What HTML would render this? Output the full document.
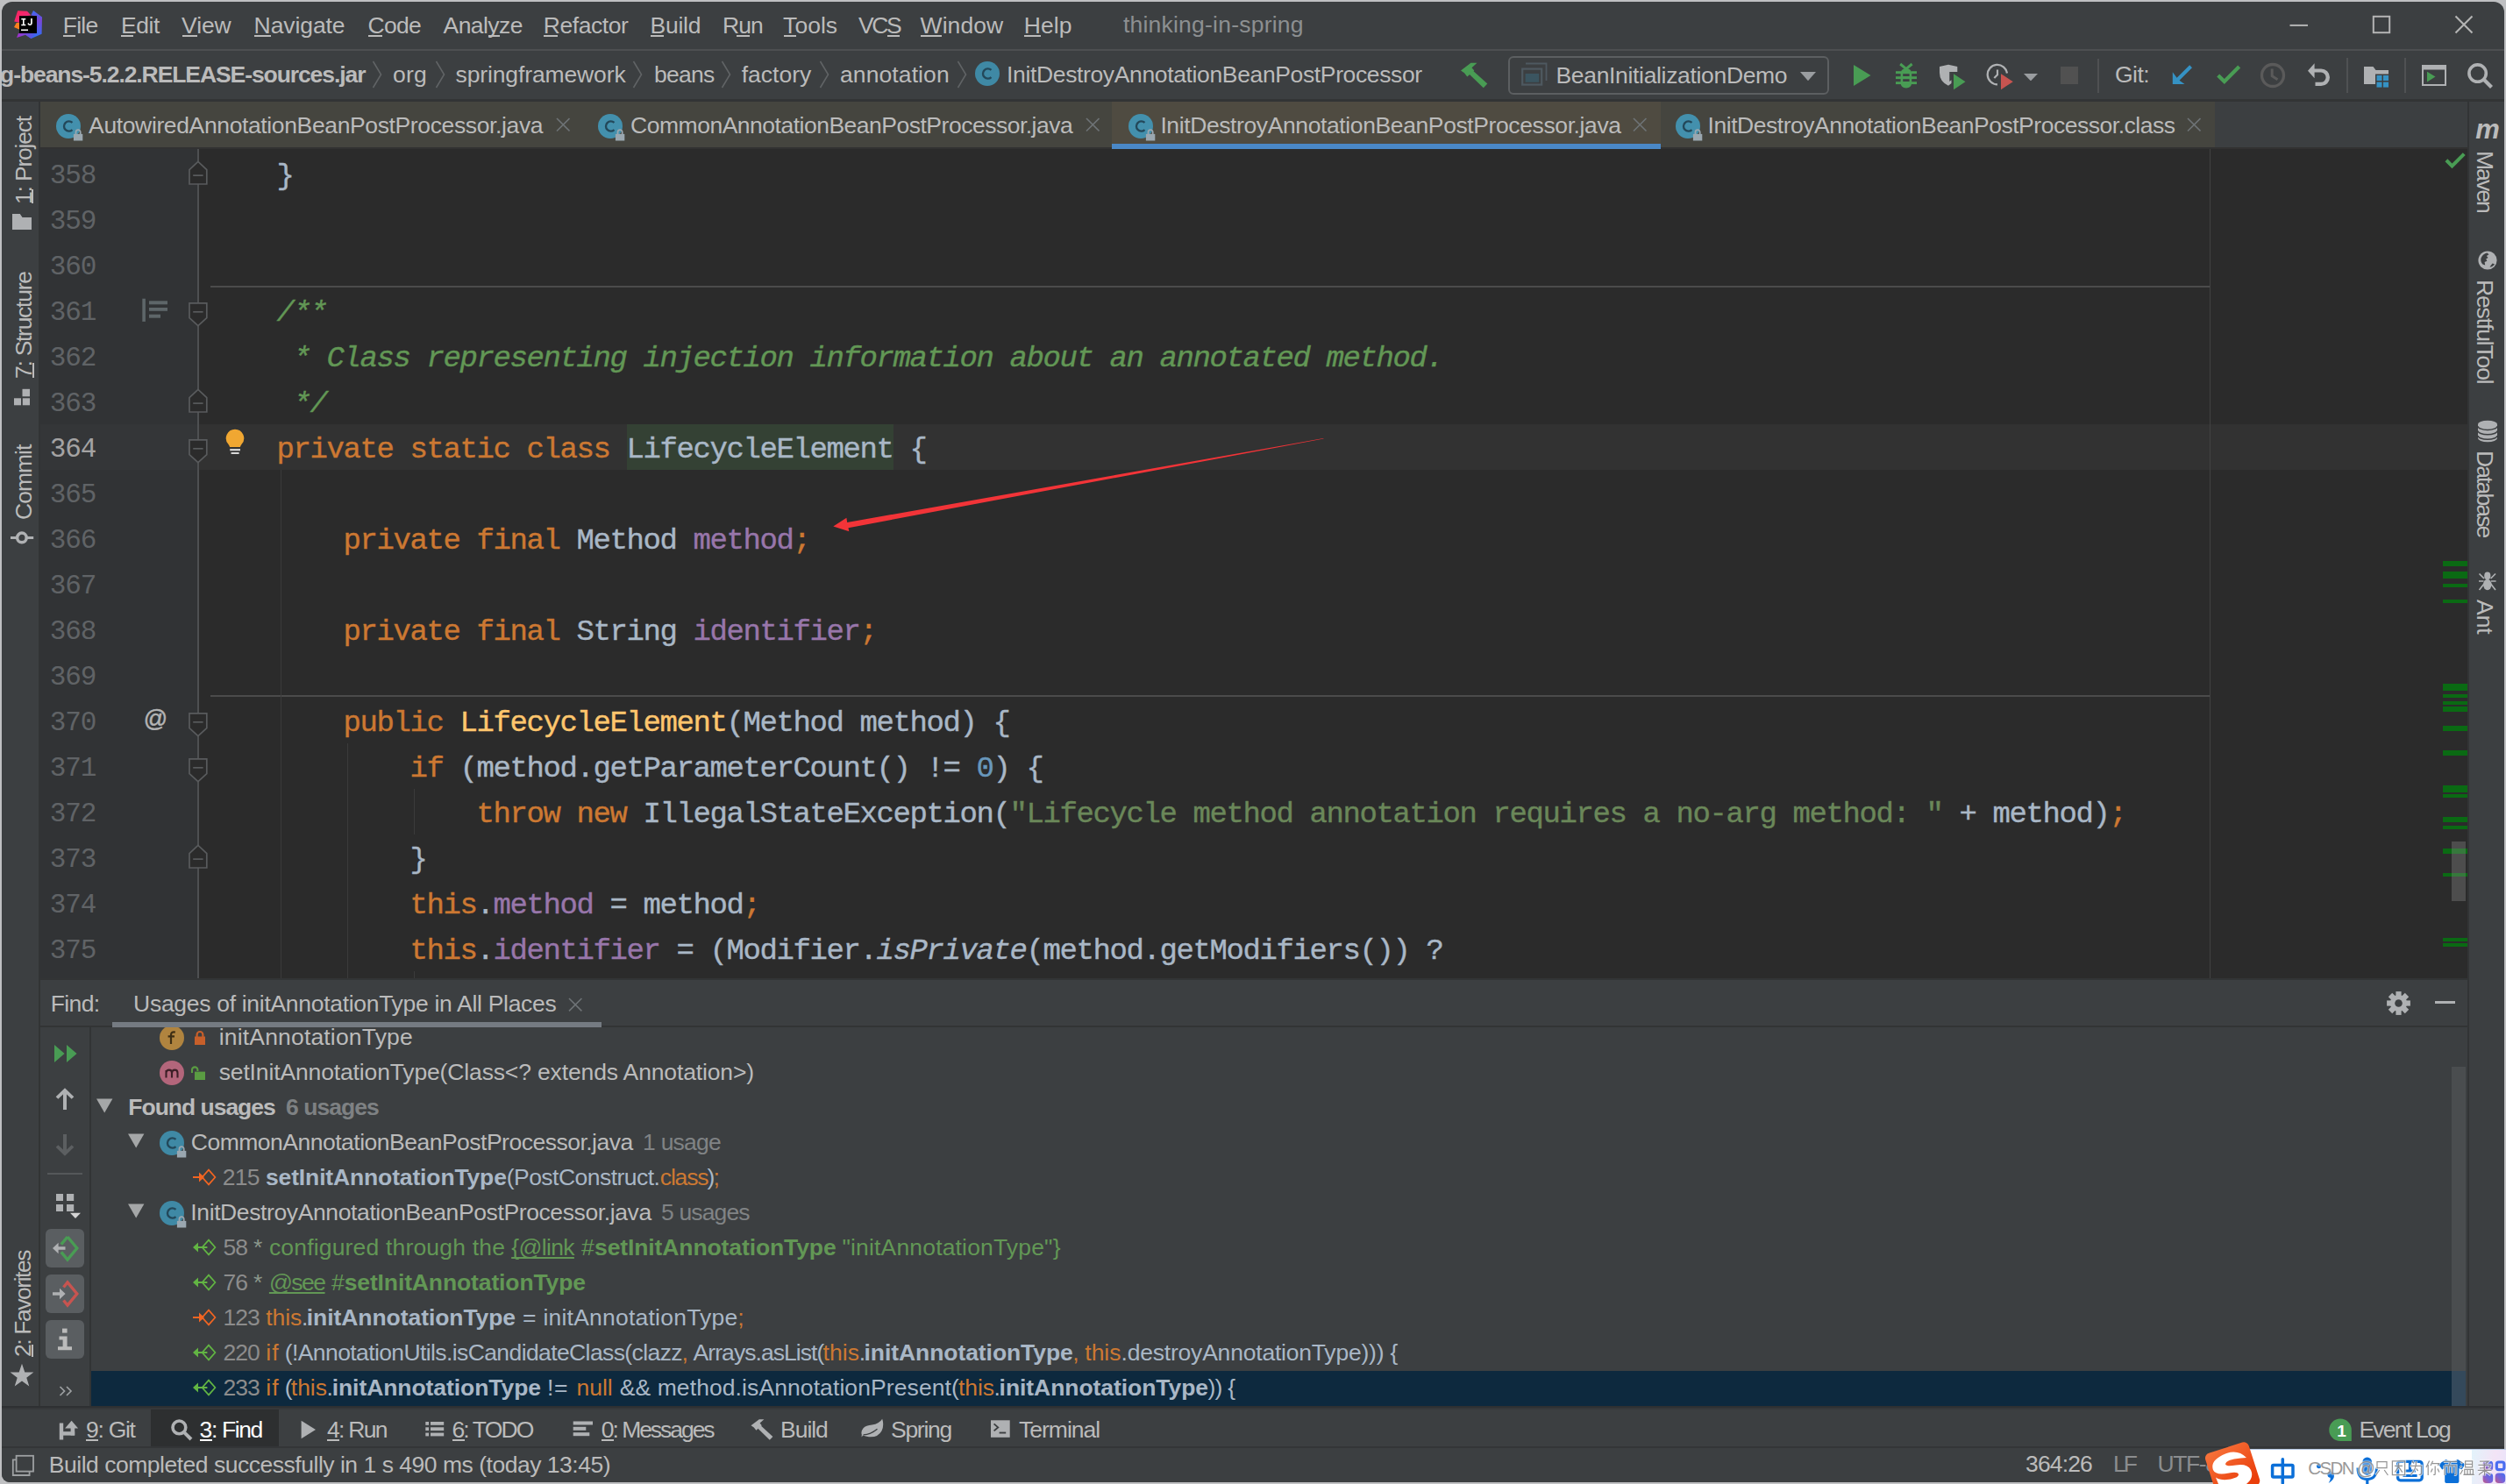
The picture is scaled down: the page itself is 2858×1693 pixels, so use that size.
<!DOCTYPE html>
<html><head><meta charset="utf-8"><title>thinking-in-spring</title><style>
html,body{margin:0;padding:0;background:#bfc0c2;}
body{width:2858px;height:1693px;position:relative;overflow:hidden;font-family:"Liberation Sans", sans-serif;}
#app{position:absolute;left:0;top:0;width:2858px;height:1693px;overflow:hidden;}
#app div,#app svg,#app span{position:absolute;}
#win{left:0;top:0;width:2858px;height:1693px;clip-path:inset(2px 2px 2px 2px round 12px 12px 9px 9px);}
#app span{white-space:pre;line-height:1em;text-decoration-skip-ink:none;}
.s{font-family:"Liberation Sans", sans-serif;}
.m{font-family:"Liberation Mono", monospace;}
</style></head><body><div id="app">
<div id="win">
<div style="left:0px;top:0px;width:2858px;height:1693px;background:#3c3f41;"></div>
<div style="left:2px;top:56px;width:2854px;height:2px;background:#4d4f51;"></div>
<span class="s" style="left:71.7px;top:15.9px;font-size:26.5px;color:#bbbbbb;letter-spacing:-0.712px">File</span>
<span class="s" style="left:137.9px;top:15.9px;font-size:26.5px;color:#bbbbbb;letter-spacing:-0.404px">Edit</span>
<span class="s" style="left:207.1px;top:15.9px;font-size:26.5px;color:#bbbbbb;letter-spacing:-0.128px">View</span>
<span class="s" style="left:289.6px;top:15.9px;font-size:26.5px;color:#bbbbbb;letter-spacing:-0.092px">Navigate</span>
<span class="s" style="left:419.5px;top:15.9px;font-size:26.5px;color:#bbbbbb;letter-spacing:-0.726px">Code</span>
<span class="s" style="left:505.5px;top:15.9px;font-size:26.5px;color:#bbbbbb;letter-spacing:-0.547px">Analyze</span>
<span class="s" style="left:619.8px;top:15.9px;font-size:26.5px;color:#bbbbbb;letter-spacing:-0.450px">Refactor</span>
<span class="s" style="left:741.6px;top:15.9px;font-size:26.5px;color:#bbbbbb;letter-spacing:-0.257px">Build</span>
<span class="s" style="left:824.0px;top:15.9px;font-size:26.5px;color:#bbbbbb;letter-spacing:-0.890px">Run</span>
<span class="s" style="left:893.1px;top:15.9px;font-size:26.5px;color:#bbbbbb;letter-spacing:0.036px">Tools</span>
<span class="s" style="left:979.1px;top:15.9px;font-size:26.5px;color:#bbbbbb;letter-spacing:-2.415px">VCS</span>
<span class="s" style="left:1049.6px;top:15.9px;font-size:26.5px;color:#bbbbbb;letter-spacing:0.065px">Window</span>
<span class="s" style="left:1167.8px;top:15.9px;font-size:26.5px;color:#bbbbbb;letter-spacing:0.035px">Help</span>
<span class="s" style="left:1280.9px;top:14.5px;font-size:26.5px;color:#8c8f91;letter-spacing:0.225px">thinking-in-spring</span>
<div style="left:2px;top:113px;width:2854px;height:3px;background:#323435;"></div>
<span class="s" style="left:0.1px;top:71.8px;font-size:26.5px;color:#bbbbbb;font-weight:bold;letter-spacing:-1.087px">g-beans-5.2.2.RELEASE-sources.jar</span>
<span class="s" style="left:448.0px;top:71.8px;font-size:26.5px;color:#bbbbbb;letter-spacing:0.214px">org</span>
<span class="s" style="left:519.5px;top:71.8px;font-size:26.5px;color:#bbbbbb;letter-spacing:-0.121px">springframework</span>
<span class="s" style="left:746.0px;top:71.8px;font-size:26.5px;color:#bbbbbb;letter-spacing:-0.710px">beans</span>
<span class="s" style="left:845.7px;top:71.8px;font-size:26.5px;color:#bbbbbb">factory</span>
<span class="s" style="left:958.0px;top:71.8px;font-size:26.5px;color:#bbbbbb;letter-spacing:0.097px">annotation</span>
<span class="s" style="left:1148.1px;top:71.8px;font-size:26.5px;color:#bbbbbb;letter-spacing:-0.364px">InitDestroyAnnotationBeanPostProcessor</span>
<div style="left:46px;top:116px;width:2768px;height:52px;background:#3c3f41;"></div>
<div style="left:46px;top:168px;width:2768px;height:948px;background:#2b2b2b;"></div>
<div style="left:46px;top:168px;width:180px;height:948px;background:#313335;"></div>
<div style="left:46px;top:484px;width:180px;height:52px;background:#343638;"></div>
<div style="left:226px;top:484px;width:2588px;height:52px;background:#323232;"></div>
<div style="left:2520px;top:168px;width:1px;height:948px;background:#424242;"></div>
<div style="left:225px;top:168px;width:2px;height:948px;background:#4e5052;"></div>
<div style="left:240px;top:326px;width:2280px;height:2px;background:#4b4b4b;"></div>
<div style="left:240px;top:793px;width:2280px;height:2px;background:#4b4b4b;"></div>
<div style="left:320px;top:536px;width:1px;height:580px;background:#3b3b3b;"></div>
<div style="left:396px;top:848px;width:1px;height:268px;background:#3b3b3b;"></div>
<div style="left:472px;top:900px;width:1px;height:52px;background:#3b3b3b;"></div>
<div style="left:472px;top:1108px;width:1px;height:8px;background:#3b3b3b;"></div>
<div style="left:715px;top:484px;width:304px;height:52px;background:#344134;"></div>
<span class="m" style="left:315.5px;top:183.5px;font-size:34px;color:#a9b7c6;letter-spacing:-1.403px;-webkit-text-stroke:0.4px">}</span>
<span class="m" style="left:315.5px;top:339.5px;font-size:34px;color:#629755;font-style:italic;letter-spacing:-1.403px;-webkit-text-stroke:0.4px">/**</span>
<span class="m" style="left:334.5px;top:391.5px;font-size:34px;color:#629755;font-style:italic;letter-spacing:-1.403px;-webkit-text-stroke:0.4px">* Class representing injection information about an annotated method.</span>
<span class="m" style="left:334.5px;top:443.5px;font-size:34px;color:#629755;font-style:italic;letter-spacing:-1.403px;-webkit-text-stroke:0.4px">*/</span>
<span class="m" style="left:315.5px;top:495.5px;font-size:34px;color:#cc7832;letter-spacing:-1.403px;-webkit-text-stroke:0.4px">private static class</span>
<span class="m" style="left:714.5px;top:495.5px;font-size:34px;color:#a9b7c6;letter-spacing:-1.403px;-webkit-text-stroke:0.4px">LifecycleElement</span>
<span class="m" style="left:1037.5px;top:495.5px;font-size:34px;color:#a9b7c6;letter-spacing:-1.403px;-webkit-text-stroke:0.4px">{</span>
<span class="m" style="left:391.5px;top:599.5px;font-size:34px;color:#cc7832;letter-spacing:-1.403px;-webkit-text-stroke:0.4px">private final</span>
<span class="m" style="left:657.5px;top:599.5px;font-size:34px;color:#a9b7c6;letter-spacing:-1.403px;-webkit-text-stroke:0.4px">Method</span>
<span class="m" style="left:790.5px;top:599.5px;font-size:34px;color:#9876aa;letter-spacing:-1.403px;-webkit-text-stroke:0.4px">method</span>
<span class="m" style="left:904.5px;top:599.5px;font-size:34px;color:#cc7832;letter-spacing:-1.403px;-webkit-text-stroke:0.4px">;</span>
<span class="m" style="left:391.5px;top:703.5px;font-size:34px;color:#cc7832;letter-spacing:-1.403px;-webkit-text-stroke:0.4px">private final</span>
<span class="m" style="left:657.5px;top:703.5px;font-size:34px;color:#a9b7c6;letter-spacing:-1.403px;-webkit-text-stroke:0.4px">String</span>
<span class="m" style="left:790.5px;top:703.5px;font-size:34px;color:#9876aa;letter-spacing:-1.403px;-webkit-text-stroke:0.4px">identifier</span>
<span class="m" style="left:980.5px;top:703.5px;font-size:34px;color:#cc7832;letter-spacing:-1.403px;-webkit-text-stroke:0.4px">;</span>
<span class="m" style="left:391.5px;top:807.5px;font-size:34px;color:#cc7832;letter-spacing:-1.403px;-webkit-text-stroke:0.4px">public</span>
<span class="m" style="left:524.5px;top:807.5px;font-size:34px;color:#ffc66d;letter-spacing:-1.403px;-webkit-text-stroke:0.4px">LifecycleElement</span>
<span class="m" style="left:828.5px;top:807.5px;font-size:34px;color:#a9b7c6;letter-spacing:-1.403px;-webkit-text-stroke:0.4px">(Method method) {</span>
<span class="m" style="left:467.5px;top:859.5px;font-size:34px;color:#cc7832;letter-spacing:-1.403px;-webkit-text-stroke:0.4px">if</span>
<span class="m" style="left:524.5px;top:859.5px;font-size:34px;color:#a9b7c6;letter-spacing:-1.403px;-webkit-text-stroke:0.4px">(method.getParameterCount() !=</span>
<span class="m" style="left:1113.5px;top:859.5px;font-size:34px;color:#6897bb;letter-spacing:-1.403px;-webkit-text-stroke:0.4px">0</span>
<span class="m" style="left:1132.5px;top:859.5px;font-size:34px;color:#a9b7c6;letter-spacing:-1.403px;-webkit-text-stroke:0.4px">) {</span>
<span class="m" style="left:543.5px;top:911.5px;font-size:34px;color:#cc7832;letter-spacing:-1.403px;-webkit-text-stroke:0.4px">throw new</span>
<span class="m" style="left:733.5px;top:911.5px;font-size:34px;color:#a9b7c6;letter-spacing:-1.403px;-webkit-text-stroke:0.4px">IllegalStateException(</span>
<span class="m" style="left:1151.5px;top:911.5px;font-size:34px;color:#6a8759;letter-spacing:-1.403px;-webkit-text-stroke:0.4px">&quot;Lifecycle method annotation requires a no-arg method: &quot;</span>
<span class="m" style="left:2234.5px;top:911.5px;font-size:34px;color:#a9b7c6;letter-spacing:-1.403px;-webkit-text-stroke:0.4px">+ method)</span>
<span class="m" style="left:2405.5px;top:911.5px;font-size:34px;color:#cc7832;letter-spacing:-1.403px;-webkit-text-stroke:0.4px">;</span>
<span class="m" style="left:467.5px;top:963.5px;font-size:34px;color:#a9b7c6;letter-spacing:-1.403px;-webkit-text-stroke:0.4px">}</span>
<span class="m" style="left:467.5px;top:1015.5px;font-size:34px;color:#cc7832;letter-spacing:-1.403px;-webkit-text-stroke:0.4px">this</span>
<span class="m" style="left:543.5px;top:1015.5px;font-size:34px;color:#a9b7c6;letter-spacing:-1.403px;-webkit-text-stroke:0.4px">.</span>
<span class="m" style="left:562.5px;top:1015.5px;font-size:34px;color:#9876aa;letter-spacing:-1.403px;-webkit-text-stroke:0.4px">method</span>
<span class="m" style="left:695.5px;top:1015.5px;font-size:34px;color:#a9b7c6;letter-spacing:-1.403px;-webkit-text-stroke:0.4px">= method</span>
<span class="m" style="left:847.5px;top:1015.5px;font-size:34px;color:#cc7832;letter-spacing:-1.403px;-webkit-text-stroke:0.4px">;</span>
<span class="m" style="left:467.5px;top:1067.5px;font-size:34px;color:#cc7832;letter-spacing:-1.403px;-webkit-text-stroke:0.4px">this</span>
<span class="m" style="left:543.5px;top:1067.5px;font-size:34px;color:#a9b7c6;letter-spacing:-1.403px;-webkit-text-stroke:0.4px">.</span>
<span class="m" style="left:562.5px;top:1067.5px;font-size:34px;color:#9876aa;letter-spacing:-1.403px;-webkit-text-stroke:0.4px">identifier</span>
<span class="m" style="left:771.5px;top:1067.5px;font-size:34px;color:#a9b7c6;letter-spacing:-1.403px;-webkit-text-stroke:0.4px">= (Modifier.</span>
<span class="m" style="left:999.5px;top:1067.5px;font-size:34px;color:#a9b7c6;font-style:italic;letter-spacing:-1.403px;-webkit-text-stroke:0.4px">isPrivate</span>
<span class="m" style="left:1170.5px;top:1067.5px;font-size:34px;color:#a9b7c6;letter-spacing:-1.403px;-webkit-text-stroke:0.4px">(method.getModifiers()) ?</span>
<span class="m" style="left:56.7px;top:185.2px;font-size:31px;color:#606366;letter-spacing:-1.014px">358</span>
<span class="m" style="left:56.7px;top:237.2px;font-size:31px;color:#606366;letter-spacing:-1.014px">359</span>
<span class="m" style="left:56.7px;top:289.2px;font-size:31px;color:#606366;letter-spacing:-1.014px">360</span>
<span class="m" style="left:56.7px;top:341.2px;font-size:31px;color:#606366;letter-spacing:-1.014px">361</span>
<span class="m" style="left:56.7px;top:393.2px;font-size:31px;color:#606366;letter-spacing:-1.014px">362</span>
<span class="m" style="left:56.7px;top:445.2px;font-size:31px;color:#606366;letter-spacing:-1.014px">363</span>
<span class="m" style="left:56.7px;top:497.2px;font-size:31px;color:#a4a3a3;letter-spacing:-1.014px">364</span>
<span class="m" style="left:56.7px;top:549.2px;font-size:31px;color:#606366;letter-spacing:-1.014px">365</span>
<span class="m" style="left:56.7px;top:601.2px;font-size:31px;color:#606366;letter-spacing:-1.014px">366</span>
<span class="m" style="left:56.7px;top:653.2px;font-size:31px;color:#606366;letter-spacing:-1.014px">367</span>
<span class="m" style="left:56.7px;top:705.2px;font-size:31px;color:#606366;letter-spacing:-1.014px">368</span>
<span class="m" style="left:56.7px;top:757.2px;font-size:31px;color:#606366;letter-spacing:-1.014px">369</span>
<span class="m" style="left:56.7px;top:809.2px;font-size:31px;color:#606366;letter-spacing:-1.014px">370</span>
<span class="m" style="left:56.7px;top:861.2px;font-size:31px;color:#606366;letter-spacing:-1.014px">371</span>
<span class="m" style="left:56.7px;top:913.2px;font-size:31px;color:#606366;letter-spacing:-1.014px">372</span>
<span class="m" style="left:56.7px;top:965.2px;font-size:31px;color:#606366;letter-spacing:-1.014px">373</span>
<span class="m" style="left:56.7px;top:1017.2px;font-size:31px;color:#606366;letter-spacing:-1.014px">374</span>
<span class="m" style="left:56.7px;top:1069.2px;font-size:31px;color:#606366;letter-spacing:-1.014px">375</span>
<div style="left:2px;top:116px;width:42px;height:1535px;background:#3c3f41;"></div>
<div style="left:44px;top:116px;width:2px;height:1490px;background:#323435;"></div>
<div style="left:2814px;top:116px;width:2px;height:1490px;background:#323435;"></div>
<div style="left:2816px;top:116px;width:40px;height:1490px;background:#3c3f41;"></div>
<div style="left:46px;top:1116px;width:2768px;height:2px;background:#323435;"></div>
<div style="left:46px;top:1118px;width:2768px;height:52px;background:#3c3f41;"></div>
<div style="left:46px;top:1170px;width:2768px;height:2px;background:#323435;"></div>
<div style="left:46px;top:1172px;width:2768px;height:432px;background:#3c3f41;"></div>
<div style="left:102px;top:1172px;width:2px;height:432px;background:#323435;"></div>
<div style="left:104px;top:1564px;width:2692px;height:40px;background:#0d293e;"></div>
<svg style="left:15px;top:11px;" width="34" height="34" viewBox="0 0 34 34">
<defs>
<linearGradient id="lg1" x1="0" y1="0" x2="1" y2="1"><stop offset="0" stop-color="#ff2358"/><stop offset="1" stop-color="#e52d8a"/></linearGradient>
<linearGradient id="lg2" x1="0.5" y1="0" x2="0.5" y2="1"><stop offset="0" stop-color="#3b6cf4"/><stop offset="0.35" stop-color="#7a45d8"/><stop offset="1" stop-color="#2a72f6"/></linearGradient>
<linearGradient id="lg3" x1="0" y1="0.5" x2="1" y2="0.5"><stop offset="0" stop-color="#a52fc9"/><stop offset="1" stop-color="#3a63ea"/></linearGradient>
</defs>
<path d="M5.2 1.2 L16 1.8 L20.3 6.5 L8 8 L8 15 L1.2 13.4 Z" fill="url(#lg1)"/>
<path d="M3.8 15 L8 15 L8 23 L1 20 Z" fill="#fc801d"/>
<path d="M23 1 L33 8.5 L32.6 27.8 L20.5 33 L14 28.5 L27 26.8 L27 7.5 L20.3 6.5 Z" fill="url(#lg2)"/>
<path d="M6 27 L27 26.8 L20.5 33 L14 28.7 L4 32 Z" fill="url(#lg3)"/>
<rect x="7" y="7.2" width="20" height="19.8" fill="#000"/>
<rect x="9" y="22.5" width="8" height="1.5" fill="#fff"/>
<path d="M9.3 10 h5 v1.4 h-1.7 v5.4 h1.7 v1.4 h-5 v-1.4 h1.7 v-5.4 h-1.7 Z" fill="#fff"/>
<path d="M16.3 16.1 l1.1 -1 q0.6 1.3 1.6 1.3 q1.1 0 1.1 -1.5 v-4.9 h1.7 v5 q0 3 -2.8 3 q-1.8 0 -2.7 -1.9 Z" fill="#fff"/>
</svg>
<div style="left:72px;top:40px;width:14px;height:2px;background:#bbbbbb;"></div>
<div style="left:138px;top:40px;width:14px;height:2px;background:#bbbbbb;"></div>
<div style="left:208px;top:40px;width:17px;height:2px;background:#bbbbbb;"></div>
<div style="left:290px;top:40px;width:19px;height:2px;background:#bbbbbb;"></div>
<div style="left:420px;top:40px;width:16px;height:2px;background:#bbbbbb;"></div>
<div style="left:557px;top:40px;width:13px;height:2px;background:#bbbbbb;"></div>
<div style="left:620px;top:40px;width:16px;height:2px;background:#bbbbbb;"></div>
<div style="left:742px;top:40px;width:15px;height:2px;background:#bbbbbb;"></div>
<div style="left:840px;top:40px;width:15px;height:2px;background:#bbbbbb;"></div>
<div style="left:894px;top:40px;width:14px;height:2px;background:#bbbbbb;"></div>
<div style="left:1012px;top:40px;width:14px;height:2px;background:#bbbbbb;"></div>
<div style="left:1050px;top:40px;width:24px;height:2px;background:#bbbbbb;"></div>
<div style="left:1168px;top:40px;width:19px;height:2px;background:#bbbbbb;"></div>
<svg style="left:2610px;top:27px;" width="24" height="4" viewBox="0 0 24 4"><rect x="1.5" y="0.9" width="20.5" height="2" fill="#b4b4b4"/></svg>
<svg style="left:2704px;top:16px;" width="24" height="24" viewBox="0 0 24 24"><rect x="2.8" y="2.8" width="18.4" height="18.4" fill="none" stroke="#b4b4b4" stroke-width="2"/></svg>
<svg style="left:2798px;top:16px;" width="24" height="24" viewBox="0 0 24 24"><path d="M2.5 2.5 L21.5 21.5 M21.5 2.5 L2.5 21.5" stroke="#b4b4b4" stroke-width="2.1" fill="none"/></svg>
<svg style="left:423.8px;top:69px;" width="12.5" height="32" viewBox="0 0 12.5 32"><path d="M1.5 1 L10.5 16.0 L1.5 31" fill="none" stroke="#606365" stroke-width="1.6"/></svg>
<svg style="left:495.6px;top:69px;" width="12.5" height="32" viewBox="0 0 12.5 32"><path d="M1.5 1 L10.5 16.0 L1.5 31" fill="none" stroke="#606365" stroke-width="1.6"/></svg>
<svg style="left:721.3px;top:69px;" width="12.5" height="32" viewBox="0 0 12.5 32"><path d="M1.5 1 L10.5 16.0 L1.5 31" fill="none" stroke="#606365" stroke-width="1.6"/></svg>
<svg style="left:821.5px;top:69px;" width="12.5" height="32" viewBox="0 0 12.5 32"><path d="M1.5 1 L10.5 16.0 L1.5 31" fill="none" stroke="#606365" stroke-width="1.6"/></svg>
<svg style="left:933.6px;top:69px;" width="12.5" height="32" viewBox="0 0 12.5 32"><path d="M1.5 1 L10.5 16.0 L1.5 31" fill="none" stroke="#606365" stroke-width="1.6"/></svg>
<svg style="left:1091.2px;top:69px;" width="12.5" height="32" viewBox="0 0 12.5 32"><path d="M1.5 1 L10.5 16.0 L1.5 31" fill="none" stroke="#606365" stroke-width="1.6"/></svg>
<svg style="left:1111px;top:69px;" width="36" height="36" viewBox="0 0 36 36"><circle cx="15" cy="15" r="14" fill="#3f89a5"/><path d="M19.48 10.97 A5.60 5.60 0 1 0 19.48 19.03" fill="none" stroke="#23485a" stroke-width="2.38"/></svg>
<svg style="left:1664px;top:70px;" width="34" height="32" viewBox="0 0 34 32"><g fill="#499c54"><path d="M2 10.5 L13.5 1.8 L20.5 1.8 L14.5 7.2 L17.3 10.5 L9.3 17.5 L6 13.2 Z"/><path d="M11.5 14.5 L16 10.8 L32.3 25.6 L27.8 30.2 Z"/></g></svg>
<div style="left:1720px;top:64px;width:362px;height:40px;border:2px solid #5c5f61;border-radius:6px"></div>
<svg style="left:1735px;top:71px;" width="30" height="28" viewBox="0 0 30 28"><path d="M5 1.5 H28.5 V21" fill="none" stroke="#4e5960" stroke-width="1.8"/><rect x="1.2" y="7.6" width="22" height="18" fill="none" stroke="#4e5960" stroke-width="2.2"/><rect x="4.6" y="13" width="15.6" height="9.8" fill="#3b5560"/></svg>
<span class="s" style="left:1774.5px;top:73.4px;font-size:26.5px;color:#bbbbbb;letter-spacing:-0.331px">BeanInitializationDemo</span>
<svg style="left:2053px;top:82px;" width="18" height="10.2" viewBox="0 0 18 10.2"><path d="M0 0 H18 L9.0 10.2 Z" fill="#9a9da0"/></svg>
<svg style="left:2113px;top:73px;" width="22" height="26" viewBox="0 0 22 26"><path d="M1 1 L20.5 13 L1 25 Z" fill="#499c54"/></svg>
<svg style="left:2161px;top:71px;" width="26" height="30" viewBox="0 0 26 30"><path d="M6.2 2 L12.9 7.6 L19.6 2" fill="none" stroke="#499c54" stroke-width="3"/>
<g fill="#499c54"><path d="M6.6 13 Q6.6 7.2 12.9 7.2 Q19.2 7.2 19.2 13 V23 Q19.2 29.4 12.9 29.4 Q6.6 29.4 6.6 23 Z"/>
<rect x="1" y="10.2" width="6" height="2.9"/><rect x="1" y="16.2" width="6" height="2.9"/><rect x="1" y="22.2" width="6" height="2.9"/>
<rect x="19" y="10.2" width="6" height="2.9"/><rect x="19" y="16.2" width="6" height="2.9"/><rect x="19" y="22.2" width="6" height="2.9"/></g>
<rect x="9.2" y="13.2" width="7.4" height="2.8" fill="#3c3f41"/><rect x="9.2" y="19.2" width="7.4" height="2.8" fill="#3c3f41"/></svg>
<svg style="left:2211px;top:73px;" width="32" height="30" viewBox="0 0 32 30"><path d="M1 3 L11 0.8 L21.3 3 V9 H12.3 V20 L14.5 18.2 V22 L11 24.7 Q1 20 1 10 Z" fill="#afb1b3"/><path d="M17 11.2 L30.5 20.2 L17 29.2 Z" fill="#499c54"/></svg>
<svg style="left:2265px;top:72px;" width="32" height="31" viewBox="0 0 32 31"><path d="M13 24.3 A11.2 11.2 0 1 1 24 11.5" fill="none" stroke="#afb1b3" stroke-width="2.3"/><path d="M13 7.5 V13.3 L9.3 17" fill="none" stroke="#afb1b3" stroke-width="2.2"/><path d="M17 12.2 L30.8 21.2 L17 30.2 Z" fill="#c75450"/></svg>
<svg style="left:2308px;top:84px;" width="16" height="8.4" viewBox="0 0 16 8.4"><path d="M0 0 H16 L8.0 8.4 Z" fill="#9a9da0"/></svg>
<div style="left:2350px;top:76px;width:20px;height:20px;background:#515151;"></div>
<div style="left:2392px;top:67px;width:2px;height:39px;background:#4f5153;"></div>
<span class="s" style="left:2411.9px;top:72.0px;font-size:26.5px;color:#bbbbbb;letter-spacing:-0.470px">Git:</span>
<svg style="left:2476px;top:73px;" width="26" height="25" viewBox="0 0 26 25"><path d="M21.2 1.3 L24 4.2 L9.5 18.7 L15.5 23 H1.8 V9.2 L6.6 15.7 Z" fill="#3592c4"/></svg>
<svg style="left:2527px;top:73px;" width="30" height="25" viewBox="0 0 30 25"><path d="M1.2 14.5 L4.2 11.5 L9.8 17 L25.2 1.5 L28.2 4.5 L9.8 23 Z" fill="#499c54"/></svg>
<svg style="left:2577px;top:71px;" width="30" height="30" viewBox="0 0 30 30"><circle cx="15" cy="15" r="12.5" fill="none" stroke="#5a5a5a" stroke-width="3.3"/><path d="M14.2 7.5 V15.8 L20.5 19.8" fill="none" stroke="#5a5a5a" stroke-width="3"/></svg>
<svg style="left:2631px;top:71px;" width="29" height="29" viewBox="0 0 29 29"><path d="M1 9.8 L8.6 1.2 V7.4 H16.2 A9.8 9.8 0 0 1 16.2 27 H9.5 V22.8 H16 A5.6 5.6 0 0 0 16 11.6 H8.6 V18.2 Z" fill="#afb1b3"/></svg>
<div style="left:2676px;top:66px;width:2px;height:40px;background:#4f5153;"></div>
<svg style="left:2695px;top:75px;" width="31" height="26" viewBox="0 0 31 26"><path d="M1 1 H11.5 L14.5 5 H29 V9.5 H14 V21 H1 Z" fill="#afb1b3"/><rect x="15.5" y="11" width="6" height="6" fill="#3592c4"/><rect x="23" y="11" width="6" height="6" fill="#3592c4"/><rect x="15.5" y="18.6" width="6" height="6" fill="#3592c4"/><rect x="23" y="18.6" width="6" height="6" fill="#3592c4"/></svg>
<div style="left:2742px;top:66px;width:2px;height:40px;background:#4f5153;"></div>
<svg style="left:2761px;top:73px;" width="30" height="26" viewBox="0 0 30 26"><rect x="2" y="2" width="26" height="22" fill="none" stroke="#afb1b3" stroke-width="2"/><rect x="1" y="1" width="28" height="5.5" fill="#afb1b3"/><path d="M7 8.8 L16.5 14.6 L7 20.4 Z" fill="#499c54"/></svg>
<svg style="left:2812px;top:70px;" width="32" height="32" viewBox="0 0 32 32"><circle cx="13.6" cy="13.6" r="9.7" fill="none" stroke="#afb1b3" stroke-width="3.6"/><path d="M20.5 20.5 L29.5 29.5" stroke="#afb1b3" stroke-width="4.2"/></svg>
<div style="left:46px;top:168px;width:2768px;height:2px;background:#323232;"></div>
<div style="left:46px;top:116px;width:626px;height:52px;background:#45453f;"></div>
<svg style="left:63px;top:129px;" width="36" height="36" viewBox="0 0 36 36"><circle cx="15" cy="15" r="14" fill="#4390ad"/><path d="M19.48 10.97 A5.60 5.60 0 1 0 19.48 19.03" fill="none" stroke="#23485a" stroke-width="2.38"/><path d="M23.5 24.4 v-2.6 a2.6 2.6 0 0 1 5.2 0 v2.6" fill="none" stroke="#9aa7b0" stroke-width="1.8"/><rect x="20.9" y="23.9" width="10.4" height="7.6" fill="#9aa7b0"/></svg>
<span class="s" style="left:101.1px;top:129.8px;font-size:26.5px;color:#bbbbbb;letter-spacing:-0.371px">AutowiredAnnotationBeanPostProcessor.java</span>
<svg style="left:633.6px;top:134px;" width="16.5" height="16.5" viewBox="0 0 16.5 16.5"><path d="M1 1 L15.5 15.5 M15.5 1 L1 15.5" stroke="#6e7376" stroke-width="1.6" fill="none"/></svg>
<div style="left:672px;top:116px;width:596px;height:52px;background:#45453f;"></div>
<svg style="left:681.3px;top:129px;" width="36" height="36" viewBox="0 0 36 36"><circle cx="15" cy="15" r="14" fill="#4390ad"/><path d="M19.48 10.97 A5.60 5.60 0 1 0 19.48 19.03" fill="none" stroke="#23485a" stroke-width="2.38"/><path d="M23.5 24.4 v-2.6 a2.6 2.6 0 0 1 5.2 0 v2.6" fill="none" stroke="#9aa7b0" stroke-width="1.8"/><rect x="20.9" y="23.9" width="10.4" height="7.6" fill="#9aa7b0"/></svg>
<span class="s" style="left:719.1px;top:129.8px;font-size:26.5px;color:#bbbbbb;letter-spacing:-0.494px">CommonAnnotationBeanPostProcessor.java</span>
<svg style="left:1237.5px;top:134px;" width="16.5" height="16.5" viewBox="0 0 16.5 16.5"><path d="M1 1 L15.5 15.5 M15.5 1 L1 15.5" stroke="#6e7376" stroke-width="1.6" fill="none"/></svg>
<div style="left:1268px;top:116px;width:626px;height:52px;background:#4f4b41;"></div>
<div style="left:1268px;top:164px;width:626px;height:6px;background:#4a88c7;"></div>
<svg style="left:1286px;top:129px;" width="36" height="36" viewBox="0 0 36 36"><circle cx="15" cy="15" r="14" fill="#4390ad"/><path d="M19.48 10.97 A5.60 5.60 0 1 0 19.48 19.03" fill="none" stroke="#23485a" stroke-width="2.38"/><path d="M23.5 24.4 v-2.6 a2.6 2.6 0 0 1 5.2 0 v2.6" fill="none" stroke="#9aa7b0" stroke-width="1.8"/><rect x="20.9" y="23.9" width="10.4" height="7.6" fill="#9aa7b0"/></svg>
<span class="s" style="left:1323.4px;top:129.8px;font-size:26.5px;color:#bbbbbb;letter-spacing:-0.392px">InitDestroyAnnotationBeanPostProcessor.java</span>
<svg style="left:1862.2px;top:134px;" width="16.5" height="16.5" viewBox="0 0 16.5 16.5"><path d="M1 1 L15.5 15.5 M15.5 1 L1 15.5" stroke="#6e7376" stroke-width="1.6" fill="none"/></svg>
<div style="left:1894px;top:116px;width:632px;height:52px;background:#45453f;"></div>
<svg style="left:1909.5px;top:129px;" width="36" height="36" viewBox="0 0 36 36"><circle cx="15" cy="15" r="14" fill="#4390ad"/><path d="M19.48 10.97 A5.60 5.60 0 1 0 19.48 19.03" fill="none" stroke="#23485a" stroke-width="2.38"/><path d="M23.5 24.4 v-2.6 a2.6 2.6 0 0 1 5.2 0 v2.6" fill="none" stroke="#9aa7b0" stroke-width="1.8"/><rect x="20.9" y="23.9" width="10.4" height="7.6" fill="#9aa7b0"/></svg>
<span class="s" style="left:1947.6px;top:129.8px;font-size:26.5px;color:#bbbbbb;letter-spacing:-0.475px">InitDestroyAnnotationBeanPostProcessor.class</span>
<svg style="left:2493.5px;top:134px;" width="16.5" height="16.5" viewBox="0 0 16.5 16.5"><path d="M1 1 L15.5 15.5 M15.5 1 L1 15.5" stroke="#6e7376" stroke-width="1.6" fill="none"/></svg>
<svg style="left:214px;top:183px;" width="24" height="30" viewBox="0 0 24 30"><path d="M2 27 H21.8 V10.6 L11.9 1.3 L2 10.6 Z" fill="#2b2b2b" stroke="#595b5d" stroke-width="1.7"/><path d="M6.2 17.1 H17.6" stroke="#595b5d" stroke-width="1.7"/></svg>
<svg style="left:214px;top:344px;" width="24" height="30" viewBox="0 0 24 30"><path d="M2 1.8 H21.8 V18.6 L11.9 27.6 L2 18.6 Z" fill="#2b2b2b" stroke="#595b5d" stroke-width="1.7"/><path d="M6.2 11.8 H17.6" stroke="#595b5d" stroke-width="1.7"/></svg>
<svg style="left:214px;top:443px;" width="24" height="30" viewBox="0 0 24 30"><path d="M2 27 H21.8 V10.6 L11.9 1.3 L2 10.6 Z" fill="#2b2b2b" stroke="#595b5d" stroke-width="1.7"/><path d="M6.2 17.1 H17.6" stroke="#595b5d" stroke-width="1.7"/></svg>
<svg style="left:214px;top:500px;" width="24" height="30" viewBox="0 0 24 30"><path d="M2 1.8 H21.8 V18.6 L11.9 27.6 L2 18.6 Z" fill="#2b2b2b" stroke="#595b5d" stroke-width="1.7"/><path d="M6.2 11.8 H17.6" stroke="#595b5d" stroke-width="1.7"/></svg>
<svg style="left:214px;top:812px;" width="24" height="30" viewBox="0 0 24 30"><path d="M2 1.8 H21.8 V18.6 L11.9 27.6 L2 18.6 Z" fill="#2b2b2b" stroke="#595b5d" stroke-width="1.7"/><path d="M6.2 11.8 H17.6" stroke="#595b5d" stroke-width="1.7"/></svg>
<svg style="left:214px;top:864px;" width="24" height="30" viewBox="0 0 24 30"><path d="M2 1.8 H21.8 V18.6 L11.9 27.6 L2 18.6 Z" fill="#2b2b2b" stroke="#595b5d" stroke-width="1.7"/><path d="M6.2 11.8 H17.6" stroke="#595b5d" stroke-width="1.7"/></svg>
<svg style="left:214px;top:963px;" width="24" height="30" viewBox="0 0 24 30"><path d="M2 27 H21.8 V10.6 L11.9 1.3 L2 10.6 Z" fill="#2b2b2b" stroke="#595b5d" stroke-width="1.7"/><path d="M6.2 17.1 H17.6" stroke="#595b5d" stroke-width="1.7"/></svg>
<svg style="left:162px;top:340px;" width="30" height="28" viewBox="0 0 30 28"><g fill="#5e6669"><rect x="0.3" y="0.7" width="3.6" height="26.2"/><rect x="8" y="3.3" width="21" height="4"/><rect x="8" y="11" width="21" height="3.8"/><rect x="8" y="18.7" width="13" height="4"/></g></svg>
<svg style="left:256px;top:488px;" width="24" height="32" viewBox="0 0 24 32"><path d="M12 1.8 A10.2 10.2 0 0 1 19.6 18.8 Q18.2 20.5 18 22 H6 Q5.8 20.5 4.4 18.8 A10.2 10.2 0 0 1 12 1.8 Z" fill="#f0a732"/><rect x="6.2" y="24.1" width="11.8" height="2.2" fill="#d8d8d8"/><rect x="7.3" y="28" width="9.6" height="2.1" rx="1" fill="#d8d8d8"/></svg>
<span class="s" style="left:163.7px;top:807.3px;font-size:27px;color:#b4b4b4;-webkit-text-stroke:0.5px #b4b4b4">@</span>
<svg style="left:2786px;top:172px;" width="28" height="24" viewBox="0 0 28 24"><path d="M2.5 12.2 L5.3 9.3 L10.5 14.5 L22.8 2.2 L25.7 5.1 L10.5 20.3 Z" fill="#499c54"/></svg>
<div style="left:2786px;top:640px;width:28px;height:6px;background:#0a6a13;"></div>
<div style="left:2786px;top:652px;width:28px;height:8px;background:#0a6a13;"></div>
<div style="left:2786px;top:666px;width:28px;height:4px;background:#0a6a13;"></div>
<div style="left:2786px;top:684px;width:28px;height:4px;background:#0a6a13;"></div>
<div style="left:2786px;top:780px;width:28px;height:8px;background:#0a6a13;"></div>
<div style="left:2786px;top:792px;width:28px;height:4px;background:#0a6a13;"></div>
<div style="left:2786px;top:800px;width:28px;height:4px;background:#0a6a13;"></div>
<div style="left:2786px;top:806px;width:28px;height:6px;background:#0a6a13;"></div>
<div style="left:2786px;top:828px;width:28px;height:6px;background:#0a6a13;"></div>
<div style="left:2786px;top:856px;width:28px;height:6px;background:#0a6a13;"></div>
<div style="left:2786px;top:896px;width:28px;height:8px;background:#0a6a13;"></div>
<div style="left:2786px;top:906px;width:28px;height:4px;background:#0a6a13;"></div>
<div style="left:2786px;top:932px;width:28px;height:6px;background:#0a6a13;"></div>
<div style="left:2786px;top:942px;width:28px;height:4px;background:#0a6a13;"></div>
<div style="left:2786px;top:968px;width:28px;height:6px;background:#0a6a13;"></div>
<div style="left:2786px;top:996px;width:28px;height:4px;background:#0a6a13;"></div>
<div style="left:2786px;top:1070px;width:28px;height:4px;background:#0a6a13;"></div>
<div style="left:2786px;top:1076px;width:28px;height:4px;background:#0a6a13;"></div>
<div style="left:2796px;top:960px;width:16px;height:68px;background:rgba(150,150,150,0.32)"></div>
<span class="s" style="left:13.6px;top:232.8px;font-size:26.5px;color:#bbbbbb;letter-spacing:-1.190px;transform-origin:0 0;transform:rotate(-90deg)">1: Project</span>
<div style="left:36px;top:216px;width:2px;height:16px;background:#bbbbbb;"></div>
<svg style="left:13px;top:243px;" width="24" height="20" viewBox="0 0 24 20"><path d="M1 1 H9.8 L12.5 5 H23 V19 H1 Z" fill="#afb1b3"/></svg>
<span class="s" style="left:13.6px;top:431.8px;font-size:26.5px;color:#bbbbbb;letter-spacing:-1.277px;transform-origin:0 0;transform:rotate(-90deg)">7: Structure</span>
<div style="left:37px;top:414px;width:2px;height:17px;background:#bbbbbb;"></div>
<svg style="left:15px;top:443px;" width="20" height="20" viewBox="0 0 20 20"><g fill="#afb1b3"><rect x="10.5" y="0.8" width="8.5" height="8.5"/><rect x="1" y="11.3" width="8" height="8"/><rect x="10.8" y="11.3" width="8.2" height="8"/></g></svg>
<span class="s" style="left:13.6px;top:593.1px;font-size:26.5px;color:#bbbbbb;letter-spacing:-0.988px;transform-origin:0 0;transform:rotate(-90deg)">Commit</span>
<svg style="left:11px;top:604px;" width="28" height="19" viewBox="0 0 28 19"><circle cx="13.9" cy="9.4" r="5.3" fill="none" stroke="#afb1b3" stroke-width="3.5"/><path d="M1 9.4 H8.4 M19.4 9.4 H27.2" stroke="#afb1b3" stroke-width="3"/></svg>
<span class="s" style="left:2823.2px;top:131.5px;font-size:31px;color:#bbbbbb;font-weight:bold;font-style:italic">m</span>
<span class="s" style="left:2847.0px;top:171.7px;font-size:26.5px;color:#bbbbbb;letter-spacing:-1.958px;transform-origin:0 0;transform:rotate(90deg)">Maven</span>
<svg style="left:2825px;top:285px;" width="24" height="24" viewBox="0 0 24 24"><circle cx="12" cy="12" r="10.6" fill="#afb1b3"/><path d="M4.5 9.5 Q6.5 4.5 11.5 3.6 L13.5 5.2 L10.8 7 L12.6 9 L10.2 10.4 L11.4 12.8 L8.6 14 L9.2 17.4 L6.4 16.6 Q3.6 13.5 4.5 9.5 Z" fill="#3c3f41"/><path d="M14.5 19.6 L17.5 15.5 L20 16.2 Q18 19.5 14.5 19.6 Z" fill="#3c3f41"/></svg>
<span class="s" style="left:2847.0px;top:319.1px;font-size:26.5px;color:#bbbbbb;letter-spacing:-1.140px;transform-origin:0 0;transform:rotate(90deg)">RestfulTool</span>
<svg style="left:2825px;top:479px;" width="24" height="26" viewBox="0 0 24 26"><path d="M1 5 A11 4.2 0 0 1 23 5 V21 A11 4.2 0 0 1 1 21 Z" fill="#afb1b3"/><g fill="none" stroke="#3c3f41" stroke-width="1.5"><path d="M1 7.2 A11 4.2 0 0 0 23 7.2"/><path d="M1 12.6 A11 4.2 0 0 0 23 12.6"/><path d="M1 18 A11 4.2 0 0 0 23 18"/></g></svg>
<span class="s" style="left:2847.0px;top:514.1px;font-size:26.5px;color:#bbbbbb;letter-spacing:-1.887px;transform-origin:0 0;transform:rotate(90deg)">Database</span>
<svg style="left:2826px;top:650px;" width="22" height="25" viewBox="0 0 22 25"><g fill="#afb1b3"><ellipse cx="10.8" cy="7" rx="3.6" ry="4.4"/><ellipse cx="10.8" cy="17" rx="4.7" ry="6.2"/></g><g stroke="#afb1b3" stroke-width="1.7" fill="none"><path d="M7 10 L1.5 4.5 M14.6 10 L20 4.5 M6.5 13 H1 M15 13 H20.6 M7 16 L1.5 23 M14.6 16 L20 23"/></g></svg>
<span class="s" style="left:2847.0px;top:683.6px;font-size:26.5px;color:#bbbbbb;letter-spacing:-0.042px;transform-origin:0 0;transform:rotate(90deg)">Ant</span>
<span class="s" style="left:13.1px;top:1548.4px;font-size:26.5px;color:#bbbbbb;letter-spacing:-1.442px;transform-origin:0 0;transform:rotate(-90deg)">2: Favorites</span>
<div style="left:36px;top:1534px;width:2px;height:14px;background:#bbbbbb;"></div>
<svg style="left:11px;top:1555px;" width="28" height="27" viewBox="0 0 28 27"><path d="M14 0.8 L17.3 10.4 L27.4 10.6 L19.3 16.7 L22.3 26.4 L14 20.6 L5.7 26.4 L8.7 16.7 L0.6 10.6 L10.7 10.4 Z" fill="#afb1b3"/></svg>
<svg style="left:940px;top:490px;" width="580" height="125" viewBox="0 0 580 125"><path d="M10.3 110.4 L25.4 100.8 L26.2 106.0 L569.4 10.1 L569.4 10.6 L27.5 112.2 L28.3 116.2 Z" fill="#f23438"/></svg>
<div style="left:2796px;top:1217px;width:16px;height:387px;background:#4a4d4f;"></div>
<div style="left:2796px;top:1564px;width:16px;height:40px;background:#34495b;"></div>
<svg style="left:61px;top:1191px;" width="28" height="22" viewBox="0 0 28 22"><path d="M1 1 L12.6 11 L1 21 Z M15 1 L26.6 11 L15 21 Z" fill="#499c54"/></svg>
<svg style="left:63px;top:1241px;" width="22" height="26" viewBox="0 0 22 26"><path d="M11 3.5 V25" stroke="#afb1b3" stroke-width="4"/><path d="M2 11.5 L11 2.8 L20 11.5" fill="none" stroke="#afb1b3" stroke-width="3.8"/></svg>
<svg style="left:63px;top:1293px;" width="22" height="26" viewBox="0 0 22 26"><path d="M11 1 V22.5" stroke="#5c5f61" stroke-width="4"/><path d="M2 14.5 L11 23.2 L20 14.5" fill="none" stroke="#5c5f61" stroke-width="3.8"/></svg>
<div style="left:54px;top:1338px;width:40px;height:2px;background:#55585a;"></div>
<svg style="left:63px;top:1361px;" width="30" height="30" viewBox="0 0 30 30"><g fill="#afb1b3"><rect x="1" y="1" width="8" height="8"/><rect x="13" y="1" width="8.2" height="8"/><rect x="1" y="13" width="8" height="8"/><rect x="13" y="13" width="8.2" height="8"/></g><path d="M17 22.8 H29 L23 29 Z" fill="#d4d4d4"/></svg>
<div style="left:52px;top:1402px;width:44px;height:44px;background:#5a5e61;border-radius:6px"></div>
<svg style="left:58px;top:1408px;" width="32" height="32" viewBox="0 0 32 32"><path d="M19 3 L29.8 16 L19 29 L11.8 20.3 M11.8 11.7 L19 3" fill="none" stroke="#499c54" stroke-width="3.4" stroke-linejoin="miter"/><path d="M2 16 L8.6 9.8 V14.2 H16.5 V17.8 H8.6 V22.2 Z" fill="#afb1b3"/></svg>
<div style="left:52px;top:1454px;width:44px;height:44px;background:#5a5e61;border-radius:6px"></div>
<svg style="left:58px;top:1460px;" width="32" height="32" viewBox="0 0 32 32"><path d="M14.5 8.5 L19 3 L29.8 16 L19 29 L14.5 23.5" fill="none" stroke="#c75450" stroke-width="3.4"/><path d="M2 14.2 H10 V9.8 L16.6 16 L10 22.2 V17.8 H2 Z" fill="#afb1b3"/></svg>
<div style="left:52px;top:1506px;width:44px;height:44px;background:#5a5e61;border-radius:6px"></div>
<svg style="left:58px;top:1512px;" width="32" height="32" viewBox="0 0 32 32"><g fill="#bbbbbb"><rect x="13" y="3.6" width="5.6" height="5"/><path d="M9.5 12.4 H18.6 V24.2 H24 V28.2 H8 V24.2 H13.6 V16.4 H9.5 Z"/></g></svg>
<svg style="left:67px;top:1581px;" width="16" height="12" viewBox="0 0 16 12"><path d="M1.5 1 L6.5 6 L1.5 11 M9 1 L14 6 L9 11" fill="none" stroke="#9da0a2" stroke-width="1.7"/></svg>
<svg style="left:181px;top:1169px;" width="30" height="30" viewBox="0 0 30 30"><circle cx="15" cy="15" r="14" fill="#b0843f"/><path d="M18.8 8.6 Q14 7.4 14 12 V22 M10.6 13.3 H18" fill="none" stroke="#3d2e14" stroke-width="2.2"/></svg>
<svg style="left:221px;top:1175px;" width="14" height="18" viewBox="0 0 14 18"><path d="M3.6 8 V5.4 A3.4 3.4 0 0 1 10.4 5.4 V8" fill="none" stroke="#c75f2a" stroke-width="2.2"/><rect x="1" y="7.5" width="12" height="9.5" fill="#c75f2a"/></svg>
<span class="s" style="left:249.7px;top:1170.0px;font-size:26.5px;color:#bbbbbb;letter-spacing:0.178px">initAnnotationType</span>
<svg style="left:181px;top:1209px;" width="30" height="30" viewBox="0 0 30 30"><circle cx="15" cy="15" r="14" fill="#b3667b"/><path d="M8.5 20.5 V12 M8.5 14.5 Q9 11.6 11.8 11.6 Q15 11.6 15 15 V20.5 M15 14.8 Q15.5 11.6 18.3 11.6 Q21.5 11.6 21.5 15 V20.5" fill="none" stroke="#3d1f27" stroke-width="2.1"/></svg>
<svg style="left:217px;top:1215px;" width="18" height="18" viewBox="0 0 18 18"><path d="M2 9 V5.6 A3.2 3.2 0 0 1 8.4 5.6 V7" fill="none" stroke="#5a9c42" stroke-width="2.1"/><rect x="5" y="7.6" width="12" height="9.4" fill="#5a9c42"/></svg>
<span class="s" style="left:249.7px;top:1210.0px;font-size:26.5px;color:#bbbbbb;letter-spacing:-0.140px">setInitAnnotationType(Class&lt;? extends Annotation&gt;)</span>
<svg style="left:110px;top:1253.4px;" width="19" height="17" viewBox="0 0 19 17"><path d="M0 0.5 H18.4 L9.2 16.5 Z" fill="#a5a7a8"/></svg>
<span class="s" style="left:146.3px;top:1250.0px;font-size:26.5px;color:#bbbbbb;font-weight:bold;letter-spacing:-1.015px">Found usages</span>
<span class="s" style="left:325.9px;top:1250.0px;font-size:26.5px;color:#7e8183;font-weight:bold;letter-spacing:-0.923px">6 usages</span>
<svg style="left:146px;top:1293.4px;" width="19" height="17" viewBox="0 0 19 17"><path d="M0 0.5 H18.4 L9.2 16.5 Z" fill="#a5a7a8"/></svg>
<svg style="left:181px;top:1289px;" width="36" height="36" viewBox="0 0 36 36"><circle cx="15" cy="15" r="14" fill="#3f89a5"/><path d="M19.48 10.97 A5.60 5.60 0 1 0 19.48 19.03" fill="none" stroke="#23485a" stroke-width="2.38"/><path d="M23.5 24.4 v-2.6 a2.6 2.6 0 0 1 5.2 0 v2.6" fill="none" stroke="#9aa7b0" stroke-width="1.8"/><rect x="20.9" y="23.9" width="10.4" height="7.6" fill="#9aa7b0"/></svg>
<span class="s" style="left:217.8px;top:1290.0px;font-size:26.5px;color:#bbbbbb;letter-spacing:-0.500px">CommonAnnotationBeanPostProcessor.java</span>
<span class="s" style="left:733.1px;top:1290.0px;font-size:26.5px;color:#808385;letter-spacing:-0.780px">1 usage</span>
<svg style="left:219px;top:1333px;" width="28" height="20" viewBox="0 0 28 20"><path d="M19 1.6 L26.4 10 L19 18.4 L11.6 10 Z" fill="none" stroke="#f26522" stroke-width="1.7"/><path d="M1 8.9 H8 V4.6 L14 10 L8 15.4 V11.1 H1 Z" fill="#f26522"/></svg>
<span class="s" style="left:253.8px;top:1330.0px;font-size:26.5px;color:#8c8c8c;letter-spacing:-0.788px">215</span>
<span class="s" style="left:303.0px;top:1330.0px;font-size:26.5px;color:#a9b7c6;font-weight:bold;letter-spacing:-0.143px">setInitAnnotationType</span>
<span class="s" style="left:577.7px;top:1330.0px;font-size:26.5px;color:#a9b7c6;letter-spacing:-0.525px">(PostConstruct.</span>
<span class="s" style="left:752.8px;top:1330.0px;font-size:26.5px;color:#cc7832;letter-spacing:-1.167px">class</span>
<span class="s" style="left:806.6px;top:1330.0px;font-size:26.5px;color:#a9b7c6">)</span>
<span class="s" style="left:813.6px;top:1330.0px;font-size:26.5px;color:#cc7832">;</span>
<svg style="left:146px;top:1373.4px;" width="19" height="17" viewBox="0 0 19 17"><path d="M0 0.5 H18.4 L9.2 16.5 Z" fill="#a5a7a8"/></svg>
<svg style="left:181px;top:1369px;" width="36" height="36" viewBox="0 0 36 36"><circle cx="15" cy="15" r="14" fill="#3f89a5"/><path d="M19.48 10.97 A5.60 5.60 0 1 0 19.48 19.03" fill="none" stroke="#23485a" stroke-width="2.38"/><path d="M23.5 24.4 v-2.6 a2.6 2.6 0 0 1 5.2 0 v2.6" fill="none" stroke="#9aa7b0" stroke-width="1.8"/><rect x="20.9" y="23.9" width="10.4" height="7.6" fill="#9aa7b0"/></svg>
<span class="s" style="left:217.3px;top:1370.0px;font-size:26.5px;color:#bbbbbb;letter-spacing:-0.385px">InitDestroyAnnotationBeanPostProcessor.java</span>
<span class="s" style="left:754.1px;top:1370.0px;font-size:26.5px;color:#808385;letter-spacing:-0.863px">5 usages</span>
<svg style="left:219px;top:1413px;" width="28" height="20" viewBox="0 0 28 20"><path d="M19 1.6 L26.4 10 L19 18.4 L11.6 10 Z" fill="none" stroke="#62b543" stroke-width="1.7"/><path d="M1 10 L7 4.6 V8.9 H17.4 V11.1 H7 V15.4 Z" fill="#62b543"/></svg>
<span class="s" style="left:254.6px;top:1410.0px;font-size:26.5px;color:#8c8c8c;letter-spacing:-1.165px">58</span>
<span class="s" style="left:288.9px;top:1410.0px;font-size:26.5px;color:#8b978b">*</span>
<span class="s" style="left:306.9px;top:1410.0px;font-size:26.5px;color:#629755;letter-spacing:0.180px">configured through the</span>
<span class="s" style="left:583.2px;top:1410.0px;font-size:26.5px;color:#629755;text-decoration:underline;letter-spacing:-0.643px">{@link</span>
<span class="s" style="left:663.0px;top:1410.0px;font-size:26.5px;color:#629755">#</span>
<span class="s" style="left:678.0px;top:1410.0px;font-size:26.5px;color:#629755;font-weight:bold;letter-spacing:-0.105px">setInitAnnotationType</span>
<span class="s" style="left:960.5px;top:1410.0px;font-size:26.5px;color:#629755;letter-spacing:0.164px">&quot;initAnnotationType&quot;}</span>
<svg style="left:219px;top:1453px;" width="28" height="20" viewBox="0 0 28 20"><path d="M19 1.6 L26.4 10 L19 18.4 L11.6 10 Z" fill="none" stroke="#62b543" stroke-width="1.7"/><path d="M1 10 L7 4.6 V8.9 H17.4 V11.1 H7 V15.4 Z" fill="#62b543"/></svg>
<span class="s" style="left:254.6px;top:1450.0px;font-size:26.5px;color:#8c8c8c;letter-spacing:-1.165px">76</span>
<span class="s" style="left:288.9px;top:1450.0px;font-size:26.5px;color:#8b978b">*</span>
<span class="s" style="left:306.9px;top:1450.0px;font-size:26.5px;color:#629755;text-decoration:underline;letter-spacing:-1.496px">@see</span>
<span class="s" style="left:378.1px;top:1450.0px;font-size:26.5px;color:#629755">#</span>
<span class="s" style="left:392.7px;top:1450.0px;font-size:26.5px;color:#629755;font-weight:bold;letter-spacing:-0.124px">setInitAnnotationType</span>
<svg style="left:219px;top:1493px;" width="28" height="20" viewBox="0 0 28 20"><path d="M19 1.6 L26.4 10 L19 18.4 L11.6 10 Z" fill="none" stroke="#f26522" stroke-width="1.7"/><path d="M1 8.9 H8 V4.6 L14 10 L8 15.4 V11.1 H1 Z" fill="#f26522"/></svg>
<span class="s" style="left:254.6px;top:1490.0px;font-size:26.5px;color:#8c8c8c;letter-spacing:-1.021px">123</span>
<span class="s" style="left:303.3px;top:1490.0px;font-size:26.5px;color:#cc7832;letter-spacing:-0.074px">this</span>
<span class="s" style="left:343.9px;top:1490.0px;font-size:26.5px;color:#a9b7c6">.</span>
<span class="s" style="left:349.8px;top:1490.0px;font-size:26.5px;color:#a9b7c6;font-weight:bold;letter-spacing:-0.067px">initAnnotationType</span>
<span class="s" style="left:596.1px;top:1490.0px;font-size:26.5px;color:#a9b7c6;letter-spacing:0.228px">= initAnnotationType</span>
<span class="s" style="left:841.3px;top:1490.0px;font-size:26.5px;color:#cc7832">;</span>
<svg style="left:219px;top:1533px;" width="28" height="20" viewBox="0 0 28 20"><path d="M19 1.6 L26.4 10 L19 18.4 L11.6 10 Z" fill="none" stroke="#62b543" stroke-width="1.7"/><path d="M1 10 L7 4.6 V8.9 H17.4 V11.1 H7 V15.4 Z" fill="#62b543"/></svg>
<span class="s" style="left:254.6px;top:1530.0px;font-size:26.5px;color:#8c8c8c;letter-spacing:-1.021px">220</span>
<span class="s" style="left:303.3px;top:1530.0px;font-size:26.5px;color:#cc7832;letter-spacing:1.053px">if</span>
<span class="s" style="left:324.8px;top:1530.0px;font-size:26.5px;color:#a9b7c6;letter-spacing:-0.602px">(!AnnotationUtils.isCandidateClass(clazz</span>
<span class="s" style="left:777.6px;top:1530.0px;font-size:26.5px;color:#cc7832">,</span>
<span class="s" style="left:790.6px;top:1530.0px;font-size:26.5px;color:#a9b7c6;letter-spacing:-0.945px">Arrays.asList(</span>
<span class="s" style="left:938.5px;top:1530.0px;font-size:26.5px;color:#cc7832;letter-spacing:0.126px">this</span>
<span class="s" style="left:979.7px;top:1530.0px;font-size:26.5px;color:#a9b7c6">.</span>
<span class="s" style="left:985.5px;top:1530.0px;font-size:26.5px;color:#a9b7c6;font-weight:bold;letter-spacing:-0.067px">initAnnotationType</span>
<span class="s" style="left:1223.3px;top:1530.0px;font-size:26.5px;color:#cc7832">,</span>
<span class="s" style="left:1237.3px;top:1530.0px;font-size:26.5px;color:#cc7832;letter-spacing:-0.024px">this</span>
<span class="s" style="left:1278.5px;top:1530.0px;font-size:26.5px;color:#a9b7c6;letter-spacing:-0.203px">.destroyAnnotationType))) {</span>
<svg style="left:219px;top:1573px;" width="28" height="20" viewBox="0 0 28 20"><path d="M19 1.6 L26.4 10 L19 18.4 L11.6 10 Z" fill="none" stroke="#62b543" stroke-width="1.7"/><path d="M1 10 L7 4.6 V8.9 H17.4 V11.1 H7 V15.4 Z" fill="#62b543"/></svg>
<span class="s" style="left:254.6px;top:1570.0px;font-size:26.5px;color:#8c8c8c;letter-spacing:-1.021px">233</span>
<span class="s" style="left:303.3px;top:1570.0px;font-size:26.5px;color:#cc7832;letter-spacing:1.053px">if</span>
<span class="s" style="left:324.8px;top:1570.0px;font-size:26.5px;color:#a9b7c6">(</span>
<span class="s" style="left:331.8px;top:1570.0px;font-size:26.5px;color:#cc7832;letter-spacing:-0.024px">this</span>
<span class="s" style="left:372.6px;top:1570.0px;font-size:26.5px;color:#a9b7c6">.</span>
<span class="s" style="left:378.7px;top:1570.0px;font-size:26.5px;color:#a9b7c6;font-weight:bold;letter-spacing:-0.067px">initAnnotationType</span>
<span class="s" style="left:624.1px;top:1570.0px;font-size:26.5px;color:#a9b7c6;letter-spacing:0.506px">!=</span>
<span class="s" style="left:657.6px;top:1570.0px;font-size:26.5px;color:#cc7832;letter-spacing:-0.028px">null</span>
<span class="s" style="left:706.7px;top:1570.0px;font-size:26.5px;color:#a9b7c6;letter-spacing:0.092px">&amp;&amp; method.isAnnotationPresent(</span>
<span class="s" style="left:1093.1px;top:1570.0px;font-size:26.5px;color:#cc7832;letter-spacing:-0.099px">this</span>
<span class="s" style="left:1133.6px;top:1570.0px;font-size:26.5px;color:#a9b7c6">.</span>
<span class="s" style="left:1139.6px;top:1570.0px;font-size:26.5px;color:#a9b7c6;font-weight:bold;letter-spacing:-0.061px">initAnnotationType</span>
<span class="s" style="left:1377.6px;top:1570.0px;font-size:26.5px;color:#a9b7c6;letter-spacing:-0.805px">)) {</span>
<div style="left:104px;top:1118px;width:2692px;height:52px;background:#3c3f41;"></div>
<div style="left:104px;top:1170px;width:2692px;height:2px;background:#323435;"></div>
<span class="s" style="left:57.8px;top:1132.1px;font-size:26.5px;color:#bbbbbb;letter-spacing:-0.633px">Find:</span>
<span class="s" style="left:152.1px;top:1132.1px;font-size:26.5px;color:#bbbbbb;letter-spacing:-0.300px">Usages of initAnnotationType in All Places</span>
<svg style="left:647.6px;top:1138px;" width="16.4" height="16.4" viewBox="0 0 16.4 16.4"><path d="M1 1 L15.4 15.4 M15.4 1 L1 15.4" stroke="#6e7376" stroke-width="1.6" fill="none"/></svg>
<div style="left:128px;top:1166px;width:558px;height:6px;background:#757b82;"></div>
<svg style="left:2721px;top:1130px;" width="29" height="29" viewBox="0 0 29 29"><g transform="translate(14.5 14.5)" fill="#afb1b3">
<circle r="9.6"/><rect x="-3.1" y="-13.4" width="6.2" height="6" transform="rotate(0)"/><rect x="-3.1" y="-13.4" width="6.2" height="6" transform="rotate(45)"/><rect x="-3.1" y="-13.4" width="6.2" height="6" transform="rotate(90)"/><rect x="-3.1" y="-13.4" width="6.2" height="6" transform="rotate(135)"/><rect x="-3.1" y="-13.4" width="6.2" height="6" transform="rotate(180)"/><rect x="-3.1" y="-13.4" width="6.2" height="6" transform="rotate(225)"/><rect x="-3.1" y="-13.4" width="6.2" height="6" transform="rotate(270)"/><rect x="-3.1" y="-13.4" width="6.2" height="6" transform="rotate(315)"/><circle r="4.3" fill="#3c3f41"/></g></svg>
<div style="left:2777px;top:1142px;width:23px;height:3px;background:#afb1b3;"></div>
<div style="left:2px;top:1604px;width:2854px;height:2px;background:#2e3032;"></div>
<div style="left:2px;top:1606px;width:2854px;height:2px;background:#36383a;"></div>
<div style="left:2px;top:1608px;width:2854px;height:42px;background:#3c3f41;"></div>
<div style="left:2px;top:1650px;width:2854px;height:2px;background:#333537;"></div>
<div style="left:2px;top:1652px;width:2854px;height:39px;background:#3c3f41;"></div>
<div style="left:172px;top:1608px;width:146px;height:42px;background:#2d2f30;"></div>
<svg style="left:67px;top:1620px;" width="23" height="23" viewBox="0 0 23 23"><g fill="#afb1b3"><rect x="0.8" y="3.5" width="4.4" height="19"/><rect x="5" y="13.2" width="13.2" height="4.4"/><rect x="13.6" y="7.5" width="4.6" height="10"/><path d="M8.4 9.6 L15.9 0.8 L23.4 9.6 Z" transform="translate(-1.3 0)"/></g></svg>
<span class="s" style="left:98.1px;top:1618.1px;font-size:26.5px;color:#bbbbbb;letter-spacing:-1.296px">9: Git</span>
<div style="left:98px;top:1642px;width:14px;height:2px;background:#bbbbbb;"></div>
<svg style="left:194px;top:1618px;" width="27" height="27" viewBox="0 0 27 27"><circle cx="10.4" cy="10.4" r="7.4" fill="none" stroke="#afb1b3" stroke-width="3.6"/><path d="M15.8 15.8 L24 24" stroke="#afb1b3" stroke-width="4"/></svg>
<span class="s" style="left:227.6px;top:1618.1px;font-size:26.5px;color:#ffffff;letter-spacing:-1.380px">3: Find</span>
<div style="left:228px;top:1642px;width:14px;height:2px;background:#ffffff;"></div>
<svg style="left:343px;top:1620px;" width="18" height="22" viewBox="0 0 18 22"><path d="M0.6 0.8 L17 11 L0.6 21.2 Z" fill="#afb1b3"/></svg>
<span class="s" style="left:373.1px;top:1618.1px;font-size:26.5px;color:#bbbbbb;letter-spacing:-1.754px">4: Run</span>
<div style="left:373px;top:1642px;width:14px;height:2px;background:#bbbbbb;"></div>
<svg style="left:485px;top:1621px;" width="22" height="19" viewBox="0 0 22 19"><g fill="#afb1b3"><rect x="0.3" y="1" width="3.8" height="3.8"/><rect x="6" y="1" width="15.2" height="3.8"/><rect x="0.3" y="7.3" width="3.8" height="3.8"/><rect x="6" y="7.3" width="15.2" height="3.8"/><rect x="0.3" y="13.6" width="3.8" height="3.8"/><rect x="6" y="13.6" width="15.2" height="3.8"/></g></svg>
<span class="s" style="left:515.4px;top:1618.1px;font-size:26.5px;color:#bbbbbb;letter-spacing:-1.858px">6: TODO</span>
<div style="left:516px;top:1642px;width:14px;height:2px;background:#bbbbbb;"></div>
<svg style="left:653px;top:1621px;" width="24" height="18" viewBox="0 0 24 18"><g fill="#afb1b3"><rect x="0.7" y="0.5" width="22.3" height="4"/><rect x="0.7" y="6.8" width="14.6" height="4"/><rect x="0.7" y="13.2" width="18.6" height="4"/></g></svg>
<span class="s" style="left:685.8px;top:1618.1px;font-size:26.5px;color:#bbbbbb;letter-spacing:-2.045px">0: Messages</span>
<div style="left:686px;top:1642px;width:14px;height:2px;background:#bbbbbb;"></div>
<svg style="left:855px;top:1618px;" width="28" height="26" viewBox="0 0 28 26"><g fill="#afb1b3"><path d="M1.5 8.2 L10.8 1.2 L16.4 1.2 L11.6 5.6 L13.8 8.2 L7.4 13.8 L4.8 10.4 Z"/><path d="M9.2 11.4 L12.8 8.5 L26.4 21 L22.8 24.8 Z"/></g></svg>
<span class="s" style="left:890.1px;top:1618.1px;font-size:26.5px;color:#bbbbbb;letter-spacing:-1.057px">Build</span>
<svg style="left:982px;top:1618px;" width="26" height="23" viewBox="0 0 26 23"><path d="M24.2 0.8 Q26.5 8 23.6 14.2 Q19.5 22 9 21.2 Q5 21 2.2 19.6 L0.6 21.4 L0.8 18.6 Q-0.5 15 2.6 11.2 Q5.5 8 12.5 7.4 Q20.5 6.6 24.2 0.8 Z" fill="#afb1b3"/><path d="M2.6 18.8 Q11 18.5 18.5 12.2" fill="none" stroke="#3c3f41" stroke-width="1.3"/></svg>
<span class="s" style="left:1016.0px;top:1618.1px;font-size:26.5px;color:#bbbbbb;letter-spacing:-1.276px">Spring</span>
<svg style="left:1130px;top:1620px;" width="22" height="20" viewBox="0 0 22 20"><rect x="0" y="0.3" width="21.7" height="19.5" fill="#afb1b3"/><path d="M3.6 4.4 L8.2 8.4 L3.6 12.4" fill="none" stroke="#3c3f41" stroke-width="1.9"/><rect x="9.6" y="13.6" width="7.6" height="1.9" fill="#3c3f41"/></svg>
<span class="s" style="left:1162.1px;top:1618.1px;font-size:26.5px;color:#bbbbbb;letter-spacing:-1.023px">Terminal</span>
<svg style="left:2656px;top:1618px;" width="27" height="27" viewBox="0 0 27 27"><path d="M13 0.5 A12.7 12.7 0 0 1 25.8 13.2 V26 H13 A12.7 12.7 0 0 1 13 0.5 Z" fill="#499c54"/></svg>
<span class="s" style="left:2665.2px;top:1622.9px;font-size:19px;color:#ffffff;font-weight:bold">1</span>
<span class="s" style="left:2690.4px;top:1618.1px;font-size:26.5px;color:#bbbbbb;letter-spacing:-1.754px">Event Log</span>
<svg style="left:13px;top:1659px;" width="27" height="26" viewBox="0 0 27 26"><g fill="none" stroke="#9da0a2" stroke-width="1.8"><rect x="5.6" y="1.8" width="19.4" height="17.8"/><path d="M5.6 6.4 H1.8 V24 H20.6 V19.6"/></g></svg>
<span class="s" style="left:55.8px;top:1658.2px;font-size:26.5px;color:#bbbbbb;letter-spacing:-0.482px">Build completed successfully in 1 s 490 ms (today 13:45)</span>
<span class="s" style="left:2310.1px;top:1657.4px;font-size:26.5px;color:#bbbbbb;letter-spacing:-0.868px">364:26</span>
<span class="s" style="left:2410.1px;top:1657.4px;font-size:26.5px;color:#8b8d8f;letter-spacing:-3.041px">LF</span>
<span class="s" style="left:2460.6px;top:1657.4px;font-size:26.5px;color:#8b8d8f;letter-spacing:-1.445px">UTF-8</span>
</div>
<div style="left:2560px;top:1653px;width:298px;height:40px;background:#ffffff;border-top:1px solid #b9cbe6"></div>
<div style="left:2819px;top:1654px;width:39px;height:39px;background:linear-gradient(100deg,#e2f3fb 0%,#f3e4f6 60%,#e9e4fb 100%)"></div>
<svg style="left:2500px;top:1636px;" width="90" height="57" viewBox="0 0 90 57"><defs><linearGradient id="sg" x1="0" y1="0" x2="0.4" y2="1"><stop offset="0" stop-color="#f7743c"/><stop offset="1" stop-color="#ea3f0c"/></linearGradient></defs>
<g transform="translate(46.1 40.4) rotate(-17.7)"><rect x="-26" y="-26" width="52" height="52" rx="6" fill="url(#sg)"/></g>
<path d="M62 27 Q52 17 38 22.5 Q20 30 24 41 Q27 47.5 42 44.5 Q52 42.5 53 46 Q53.5 49.5 44 51.5 Q33 53.5 27 49.5 L30 57 H62 Q71 50 67 41 Q63 33.5 50 35.5 Q38 37.5 38 34 Q38.5 30.5 48 28.5 Q56 27 62 27 Z" fill="#ffffff"/></svg>
<svg style="left:2588px;top:1663px;" width="32" height="30" viewBox="0 0 32 30"><g fill="none" stroke="#0b6fd8" stroke-width="3.5" stroke-linejoin="round"><rect x="3.6" y="8.6" width="23.4" height="13.4" rx="1.2"/><path d="M15.3 1.8 V29" stroke-linecap="round"/></g></svg>
<svg style="left:2640px;top:1668px;" width="26" height="25" viewBox="0 0 26 25"><g fill="#0b6fd8"><circle cx="4.6" cy="4.6" r="2.6"/><path d="M16.5 10.6 Q22 10 22 15.6 Q22 20.5 15.6 24 Q18.2 20 17.6 17.8 Q14.5 17.5 14.4 14.2 Q14.4 11 16.5 10.6 Z"/></g></svg>
<svg style="left:2686px;top:1661px;" width="28" height="32" viewBox="0 0 28 32"><rect x="8.4" y="1.4" width="10.6" height="20.5" rx="5.3" fill="#0b6fd8"/><path d="M3 13.5 Q3 26.5 13.7 26.5 Q24.4 26.5 24.4 13.5" fill="none" stroke="#0b6fd8" stroke-width="3"/><rect x="12.2" y="26" width="3.2" height="6" fill="#0b6fd8"/></svg>
<svg style="left:2732px;top:1665px;" width="33" height="27" viewBox="0 0 33 27"><rect x="2.6" y="2.4" width="27.6" height="21.4" rx="3" fill="none" stroke="#0b6fd8" stroke-width="3.3"/><path d="M10 13 H23 M16.4 4 V13 M8.4 18.6 H24.6" stroke="#0b6fd8" stroke-width="3" fill="none"/></svg>
<svg style="left:2780px;top:1663px;" width="33" height="30" viewBox="0 0 33 30"><path d="M9.5 2 Q16.3 6 23 2 L31.5 7.5 L27.5 13.6 L24.4 12 V27.2 Q24.4 29 22.6 29 H10 Q8.2 29 8.2 27.2 V12 L5.1 13.6 L1.1 7.5 Z" fill="#0b6fd8"/></svg>
<svg style="left:2830px;top:1665px;" width="28" height="28" viewBox="0 0 28 28"><defs><linearGradient id="ag" x1="0" y1="1" x2="1" y2="0"><stop offset="0" stop-color="#c45a86"/><stop offset="0.45" stop-color="#7d62d6"/><stop offset="1" stop-color="#3f6ff2"/></linearGradient></defs>
<g fill="url(#ag)"><rect x="1.6" y="1.4" width="11.6" height="11.6" rx="4"/><rect x="1.6" y="15.4" width="11.6" height="11.6" rx="4"/><rect x="15.6" y="15.4" width="11.6" height="11.6" rx="4"/></g>
<rect x="17.3" y="3" width="8.6" height="8.6" rx="2.4" fill="none" stroke="#4a6df0" stroke-width="3.2"/></svg>
<span class="s" style="left:2632.3px;top:1664.7px;font-size:20.5px;color:#8e8e8e;letter-spacing:-1.626px;text-shadow:0 0 2px #fff,0 0 2px #fff;opacity:0.9">CSDN @</span>
<svg style="left:2707.0px;top:1665px;opacity:0.92" width="19.5" height="20" viewBox="0 0 19.5 20"><g fill="none" stroke="#ffffff" stroke-width="3.2" opacity="0.75"><path d="M4 2.5 H15 V9.5 H4 Z M6.8 12 L2.6 18 M12.2 12 L16.4 18"/></g><g fill="none" stroke="#8e8e8e" stroke-width="1.25"><path d="M4 2.5 H15 V9.5 H4 Z M6.8 12 L2.6 18 M12.2 12 L16.4 18"/></g></svg>
<svg style="left:2726.45px;top:1665px;opacity:0.92" width="19.5" height="20" viewBox="0 0 19.5 20"><g fill="none" stroke="#ffffff" stroke-width="3.2" opacity="0.75"><path d="M2.4 1.8 H16.6 V17.6 H2.4 Z M5 7.4 H14 M9.5 4 V8 L5.4 14.6 M9.6 8.4 L13.8 14.6"/></g><g fill="none" stroke="#8e8e8e" stroke-width="1.25"><path d="M2.4 1.8 H16.6 V17.6 H2.4 Z M5 7.4 H14 M9.5 4 V8 L5.4 14.6 M9.6 8.4 L13.8 14.6"/></g></svg>
<svg style="left:2745.9px;top:1665px;opacity:0.92" width="19.5" height="20" viewBox="0 0 19.5 20"><g fill="none" stroke="#ffffff" stroke-width="3.2" opacity="0.75"><path d="M5 2 L7 4.6 M2.4 7.4 H15.6 V15.6 Q15.6 17.6 12.6 17.4 M9.6 2 Q9.6 12 3 17.6 M9.6 10.4 L11.6 13"/></g><g fill="none" stroke="#8e8e8e" stroke-width="1.25"><path d="M5 2 L7 4.6 M2.4 7.4 H15.6 V15.6 Q15.6 17.6 12.6 17.4 M9.6 2 Q9.6 12 3 17.6 M9.6 10.4 L11.6 13"/></g></svg>
<svg style="left:2765.35px;top:1665px;opacity:0.92" width="19.5" height="20" viewBox="0 0 19.5 20"><g fill="none" stroke="#ffffff" stroke-width="3.2" opacity="0.75"><path d="M5.6 1.6 L2 9 M4.2 6 V18 M9.6 1.8 L7 7 M8.8 4.6 H16.6 L15.4 7 M12.2 7.6 V16.4 Q12.2 17.8 10.2 17.4 M9.2 10.4 L7.4 14.6 M15 10.4 L16.8 14.6"/></g><g fill="none" stroke="#8e8e8e" stroke-width="1.25"><path d="M5.6 1.6 L2 9 M4.2 6 V18 M9.6 1.8 L7 7 M8.8 4.6 H16.6 L15.4 7 M12.2 7.6 V16.4 Q12.2 17.8 10.2 17.4 M9.2 10.4 L7.4 14.6 M15 10.4 L16.8 14.6"/></g></svg>
<svg style="left:2784.8px;top:1665px;opacity:0.92" width="19.5" height="20" viewBox="0 0 19.5 20"><g fill="none" stroke="#ffffff" stroke-width="3.2" opacity="0.75"><path d="M1.8 2.4 H17.2 M9.6 2.4 L8.2 6.6 M3 6.8 H16 V16.4 Q16 17.8 14 17.4 M3 6.8 V18 M7.4 6.8 V15.6 M11.6 6.8 V15.6"/></g><g fill="none" stroke="#8e8e8e" stroke-width="1.25"><path d="M1.8 2.4 H17.2 M9.6 2.4 L8.2 6.6 M3 6.8 H16 V16.4 Q16 17.8 14 17.4 M3 6.8 V18 M7.4 6.8 V15.6 M11.6 6.8 V15.6"/></g></svg>
<svg style="left:2804.25px;top:1665px;opacity:0.92" width="19.5" height="20" viewBox="0 0 19.5 20"><g fill="none" stroke="#ffffff" stroke-width="3.2" opacity="0.75"><path d="M2.4 2.6 L4.6 4.4 M1.6 7.6 L3.8 9.2 M1.8 17 L4.6 12 M7.6 1.8 H15.6 V8.8 H7.6 Z M7.6 5.3 H15.6 M6.8 11.4 H16.4 V17 H6.8 Z M10 11.4 V17 M13.2 11.4 V17 M5.4 17.4 H17.8"/></g><g fill="none" stroke="#8e8e8e" stroke-width="1.25"><path d="M2.4 2.6 L4.6 4.4 M1.6 7.6 L3.8 9.2 M1.8 17 L4.6 12 M7.6 1.8 H15.6 V8.8 H7.6 Z M7.6 5.3 H15.6 M6.8 11.4 H16.4 V17 H6.8 Z M10 11.4 V17 M13.2 11.4 V17 M5.4 17.4 H17.8"/></g></svg>
<svg style="left:2823.7px;top:1665px;opacity:0.92" width="19.5" height="20" viewBox="0 0 19.5 20"><g fill="none" stroke="#ffffff" stroke-width="3.2" opacity="0.75"><path d="M4 2 H14 L10.6 5 M2.4 6.4 H16 Q16 9.4 13.6 9.2 M9.4 4.6 V9.6 L4 9.8 M1.8 12.4 H17.4 M9.6 10.6 V18.4 M9.2 12.8 L3 17.6 M10 12.8 L16.6 17.6"/></g><g fill="none" stroke="#8e8e8e" stroke-width="1.25"><path d="M4 2 H14 L10.6 5 M2.4 6.4 H16 Q16 9.4 13.6 9.2 M9.4 4.6 V9.6 L4 9.8 M1.8 12.4 H17.4 M9.6 10.6 V18.4 M9.2 12.8 L3 17.6 M10 12.8 L16.6 17.6"/></g></svg>
</div></body></html>
